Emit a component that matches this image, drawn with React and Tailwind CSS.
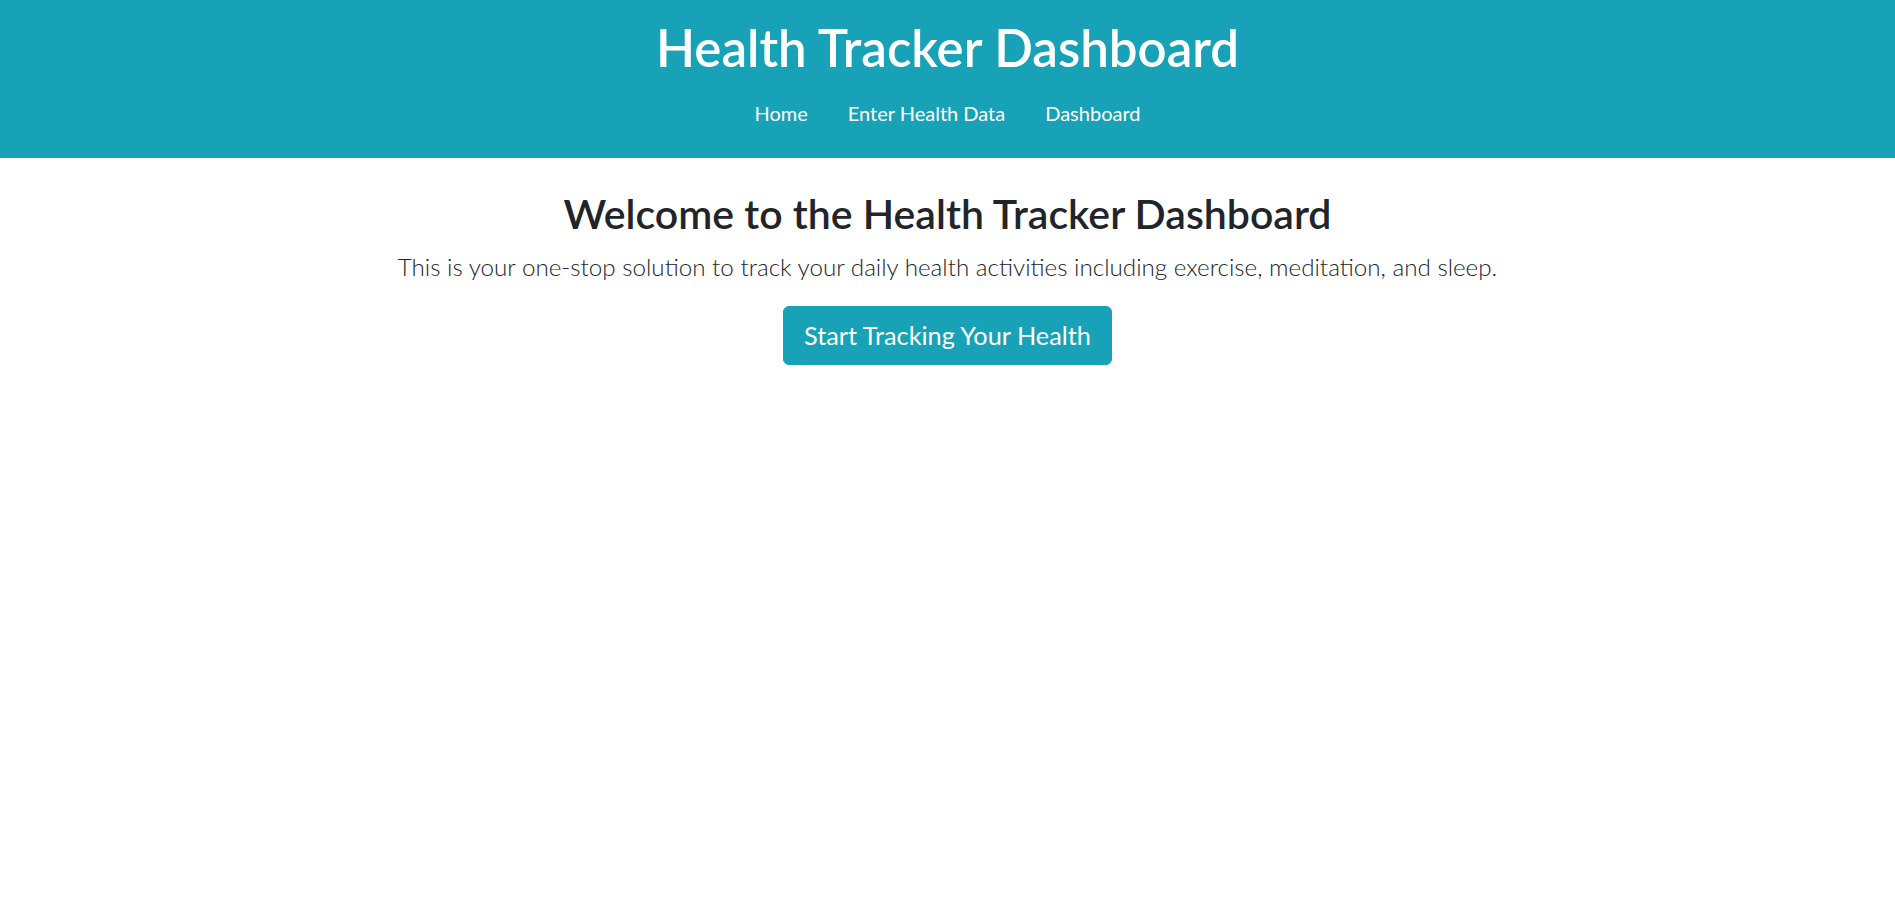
import React from 'react';

const navLinks = ['Home', 'Enter Health Data', 'Dashboard'];

const App = () => {
  return (
    <div className="min-h-screen bg-white text-[#212529]" style={{ fontFamily: 'Lato, "Noto Sans", sans-serif' }}>
      <header className="bg-[#17a2b8] text-white text-center h-[158px] pt-[18px]">
        <h1 className="text-[51px] leading-[60px] font-semibold mb-[10px]">Health Tracker Dashboard</h1>
        <nav className="flex justify-center">
          {navLinks.map(link => (
            <a key={link} href="#" className="px-5 py-[10px] text-[20px] leading-[30px] text-white">
              {link}
            </a>
          ))}
        </nav>
      </header>

      <main className="text-center mt-8">
        <h2 className="text-[41px] leading-[48px] font-semibold mb-[10px]">Welcome to the Health Tracker Dashboard</h2>
        <p className="text-[24.2px] leading-[37.5px] font-light mb-5 text-[#212529]">
          This is your one-stop solution to track your daily health activities including exercise, meditation, and sleep.
        </p>
        <button className="bg-[#17a2b8] text-white text-[25.3px] leading-[37.5px] px-5 py-[10px] rounded-[6px] border border-[#17a2b8]">
          Start Tracking Your Health
        </button>
      </main>
    </div>
  );
};

export default App;
